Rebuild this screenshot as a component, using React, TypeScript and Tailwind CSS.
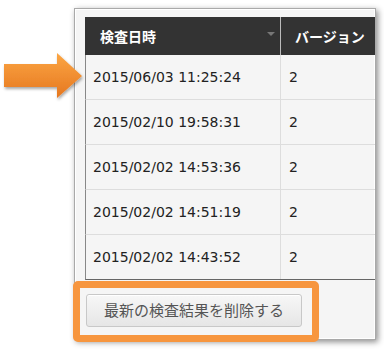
const rows = [
  "2015/06/03 11:25:24",
  "2015/02/10 19:58:31",
  "2015/02/02 14:53:36",
  "2015/02/02 14:51:19",
  "2015/02/02 14:43:52",
];

function Arrow() {
  return (
    <svg className="absolute left-0 top-[48px]" width="92" height="60" viewBox="0 48 92 60">
      <defs>
        <linearGradient id="og" x1="0" y1="0" x2="0" y2="1">
          <stop offset="0" stopColor="#fca643" />
          <stop offset="1" stopColor="#e57720" />
        </linearGradient>
        <filter id="sh" x="-20%" y="-20%" width="140%" height="150%">
          <feDropShadow dx="1" dy="2" stdDeviation="1.5" floodColor="#000" floodOpacity="0.35" />
        </filter>
      </defs>
      <polygon
        points="4,64 57,64 57,53 82,76 57,98 57,87 4,87"
        fill="url(#og)"
        filter="url(#sh)"
      />
    </svg>
  );
}

export default function App() {
  return (
    <div className="relative w-[384px] h-[351px] bg-white overflow-hidden font-['DejaVu_Sans','Noto_Sans_CJK_JP',sans-serif]">
      <div className="ml-[74px] mt-[8px] w-[302px] h-[332px] border border-[#a9a9a9] bg-[#f5f5f5] shadow-[inset_0_0_0_1px_#fff,2px_2px_6px_rgba(0,0,0,0.45)] pt-[8px] pl-[10px]">
        <div className="overflow-hidden">
          <div className="w-[330px]">
            <div className="flex h-[38px] bg-[#333] text-white font-bold text-[14px] font-['Noto_Sans_CJK_JP',sans-serif]">
              <div className="relative w-[196px] flex items-center pl-[15px] border-r border-[#bbb]">
                検査日時
                <span className="absolute left-[182px] top-[15px] w-0 h-0 border-l-[4px] border-r-[4px] border-t-[4px] border-l-transparent border-r-transparent border-t-[#777]" />
              </div>
              <div className="flex-1 flex items-center pl-[14px]">バージョン</div>
            </div>
            {rows.map((r, i) => (
              <div
                key={r}
                className={`flex h-[45px] text-[14px] text-[#222] border-l border-l-[#888] ${
                  i === rows.length - 1 ? "border-b border-b-[#666]" : "border-b border-b-[#ddd]"
                }`}
              >
                <div className="w-[195px] flex items-center pl-[7px] border-r border-[#ddd]">{r}</div>
                <div className="flex-1 flex items-center pl-[8px]">2</div>
              </div>
            ))}
          </div>
        </div>
        <div className="mt-[1px] ml-[-12px] w-[246px] h-[61px] border-[7px] border-[#f7963f] rounded-[5px] pl-[6px] pt-[6px]">
          <button className="w-[216px] h-[33px] rounded-[3px] border border-[#c8c8c8] bg-gradient-to-b from-[#f7f7f7] to-[#e6e6e6] text-[15px] text-[#555] font-['Noto_Sans_CJK_JP',sans-serif] shadow-[inset_0_1px_0_#fff]">
            最新の検査結果を削除する
          </button>
        </div>
      </div>
      <Arrow />
    </div>
  );
}
